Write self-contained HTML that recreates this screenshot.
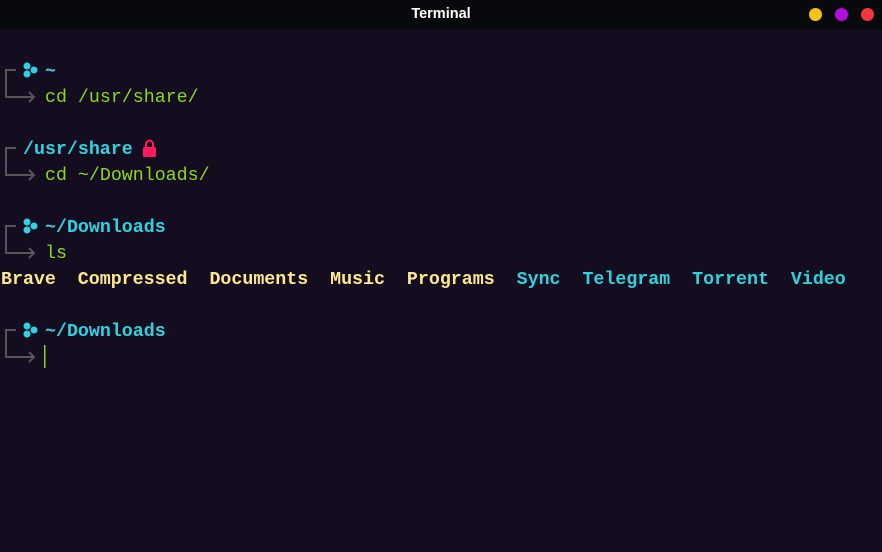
<!DOCTYPE html><html><head><style>
body{margin:0;width:882px;height:552px;background:#140d1f;overflow:hidden;position:relative;font-family:"Liberation Mono",monospace;font-size:18.3px}
.t{position:absolute;left:0;top:0;width:882px;height:29px;background:#08090c;color:#fff;font-family:"Liberation Sans",sans-serif;font-size:14.5px;font-weight:bold;text-align:center;line-height:29px}
.d{position:absolute;top:8px;width:13px;height:13px;border-radius:50%}
.l{position:absolute;white-space:pre;line-height:26px;height:26px}
.c{color:#2fd3df;font-weight:bold}.g{color:#8bd81e}.y{color:#fbe98c;font-weight:bold}.cy{color:#2fd3df;font-weight:bold}
</style></head><body>
<div class="t">Terminal</div>
<div class="d" style="left:809px;background:#f8c30c"></div>
<div class="d" style="left:835px;background:#b40ddf"></div>
<div class="d" style="left:861px;background:#f5363f"></div>
<svg width="882" height="552" style="position:absolute;left:0;top:0">
<g fill="none" stroke="#555" stroke-width="2">
<path d="M16 70H6V97H34M29 92l5 5-5 5"/>
<path d="M16 148H6V175H34M29 170l5 5-5 5"/>
<path d="M16 226H6V253H34M29 248l5 5-5 5"/>
<path d="M16 330H6V357H34M29 352l5 5-5 5"/>
</g>
<g fill="#2fd3df">
<circle cx="27" cy="66" r="3.5"/><circle cx="34" cy="70" r="3.5"/><circle cx="27" cy="74" r="3.5"/>
<circle cx="27" cy="222" r="3.5"/><circle cx="34" cy="226" r="3.5"/><circle cx="27" cy="230" r="3.5"/>
<circle cx="27" cy="326" r="3.5"/><circle cx="34" cy="330" r="3.5"/><circle cx="27" cy="334" r="3.5"/>
</g>
<g fill="#ff1a5e"><rect x="143" y="147" width="13" height="10" rx="1.5"/><path d="M146 148v-4a3.5 3.5 0 0 1 7 0v4" fill="none" stroke="#ff1a5e" stroke-width="2"/></g>
<rect x="44" y="345" width="1.5" height="23" fill="#8bd81e"/>
</svg>
<div class="l c" style="left:45px;top:59px">~</div>
<div class="l g" style="left:45px;top:85px">cd /usr/share/</div>
<div class="l c" style="left:23px;top:137px">/usr/share</div>
<div class="l g" style="left:45px;top:163px">cd ~/Downloads/</div>
<div class="l c" style="left:45px;top:215px">~/Downloads</div>
<div class="l g" style="left:45px;top:241px">ls</div>
<div class="l" style="left:1px;top:267px"><span class="y">Brave  Compressed  Documents  Music  Programs  </span><span class="cy">Sync  Telegram  Torrent  Video</span></div>
<div class="l c" style="left:45px;top:319px">~/Downloads</div>
</body></html>
